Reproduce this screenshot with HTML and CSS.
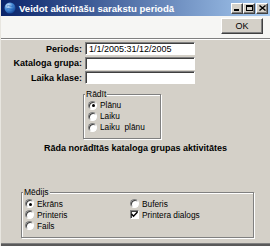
FILE: index.html
```html
<!DOCTYPE html>
<html lang="lv">
<head>
    <meta charset="UTF-8">
    <title>Veidot aktivitāšu sarakstu periodā</title>
    <link rel="stylesheet" href="styles.css">
</head>
<body>

    <div class="window">

        <!-- Title bar -->
        <div class="titlebar">
            <svg class="app-icon" width="12" height="12" viewBox="0 0 12 12">
                <defs>
                    <radialGradient id="globe" cx="0.35" cy="0.3" r="0.8">
                        <stop offset="0" stop-color="#e8f4ff"/>
                        <stop offset="0.45" stop-color="#4a8ed8"/>
                        <stop offset="1" stop-color="#0b3a8c"/>
                    </radialGradient>
                </defs>
                <circle cx="6" cy="6" r="5.5" fill="url(#globe)"/>
                <path d="M3 4 C5 3 7 5 9 4 M2.5 7 C5 6 7 8 10 7" stroke="#1d5fb8" stroke-width="0.8" fill="none"/>
            </svg>
            <span class="title">Veidot aktivitāšu sarakstu periodā</span>
            <div class="caption-buttons">
                <span class="cap-btn"><span class="min-glyph"></span></span>
                <span class="cap-btn"><span class="max-glyph"></span></span>
                <span class="cap-btn close">
                    <svg width="7" height="6" viewBox="0 0 7 6"><path d="M0.5 0.5 L6.5 5.5 M6.5 0.5 L0.5 5.5" stroke="#000" stroke-width="1.4"/></svg>
                </span>
            </div>
        </div>

        <!-- Toolbar with OK -->
        <div class="toolbar">
            <button class="btn">OK</button>
        </div>

        <div class="content">
            <div class="fields">
                <label>Periods:</label>
                <input type="text" value="1/1/2005:31/12/2005">
                <label>Kataloga grupa:</label>
                <input type="text" value="">
                <label>Laika klase:</label>
                <input type="text" value="">
            </div>

            <fieldset class="group group-show">
                <legend>Rādīt</legend>
                <div class="option"><span class="radio checked"></span>Plānu</div>
                <div class="option"><span class="radio"></span>Laiku</div>
                <div class="option"><span class="radio"></span>Laiku&nbsp; plānu</div>
            </fieldset>

            <p class="note">Rāda norādītās kataloga grupas aktivitātes</p>

            <fieldset class="group group-media">
                <legend>Mēdijs</legend>
                <div class="media-grid">
                    <div class="option"><span class="radio checked"></span>Ekrāns</div>
                    <div class="option"><span class="radio"></span>Buferis</div>
                    <div class="option"><span class="radio"></span>Printeris</div>
                    <div class="option">
                        <span class="check">
                            <svg width="7" height="7" viewBox="0 0 7 7"><path d="M0.5 3 L2.5 5.2 L6.5 1" stroke="#000" stroke-width="1.5" fill="none"/></svg>
                        </span>Printera dialogs
                    </div>
                    <div class="option"><span class="radio"></span>Fails</div>
                </div>
            </fieldset>
        </div>

        <div class="frame-bottom"></div>
    </div>

</body>
</html>
```

FILE: styles.css
```css
* {
    margin: 0;
    padding: 0;
    box-sizing: border-box;
    font-family: "Liberation Sans", Arial, sans-serif;
    font-size: 9px;
}

body {
    width: 270px;
    height: 246px;
    overflow: hidden;
    background: #d4d0c8;
}

.window {
    display: flex;
    flex-direction: column;
    height: 246px;
    border-left: 1px solid #e8e6e0;
}

/* Title bar */
.titlebar {
    height: 16px;
    display: flex;
    align-items: center;
    padding-left: 3px;
    background: linear-gradient(to right, #0a246a, #a6caf0);
    color: #fff;
}

.app-icon {
    margin-right: 3px;
}

.title {
    font-weight: bold;
    font-size: 9.6px;
    flex: 1;
    white-space: nowrap;
}

.caption-buttons {
    display: flex;
    margin-right: 2px;
}

.cap-btn {
    width: 12px;
    height: 11px;
    background: #d4d0c8;
    border: 1px solid;
    border-color: #fff #404040 #404040 #fff;
    box-shadow: inset -1px -1px 0 #808080;
    display: flex;
    align-items: center;
    justify-content: center;
}

.cap-btn.close {
    margin-left: 1px;
}

.min-glyph {
    width: 5px;
    height: 2px;
    background: #000;
    margin-top: 4px;
    margin-right: 1px;
}

.max-glyph {
    width: 7px;
    height: 6px;
    border: 1px solid #000;
    border-top-width: 2px;
}

/* Toolbar */
.toolbar {
    height: 23px;
    display: flex;
    justify-content: flex-end;
    align-items: flex-start;
    padding: 2px 7px 0 0;
    background: #f6f6f4;
    border-bottom: 1px solid #808080;
    box-shadow: 0 1px 0 #fff;
}

.btn {
    width: 42px;
    height: 16px;
    background: #d4d0c8;
    border: 1px solid;
    border-color: #fff #404040 #404040 #fff;
    box-shadow: inset -1px -1px 0 #808080;
    color: #000;
}

/* Form */
.content {
    flex: 1;
    padding-top: 3px;
    display: flex;
    flex-direction: column;
}

.fields {
    display: grid;
    grid-template-columns: 81px 110px;
    column-gap: 3px;
    row-gap: 1.5px;
    align-items: center;
}

.fields label {
    font-weight: bold;
    text-align: right;
}

.fields input {
    height: 13px;
    border: 1px solid;
    border-color: #808080 #fff #fff #808080;
    box-shadow: inset 1px 1px 0 #404040;
    padding: 0 3px;
    background: #fff;
    outline: none;
}

.group {
    border: 1px solid #808080;
    box-shadow: inset 1px 1px 0 #fff, 1px 1px 0 #fff;
    padding: 0;
    min-inline-size: 0;
}

.group legend {
    line-height: 11px;
    font-size: 8.5px;
    padding: 0 1px;
    margin-left: 1px;
    background: #d4d0c8;
}

.option {
    display: flex;
    align-items: center;
    height: 11px;
    font-size: 8.3px;
    white-space: nowrap;
}

.radio {
    width: 9px;
    height: 9px;
    border-radius: 50%;
    background: #fff;
    border: 1px solid;
    border-color: #808080 #fff #fff #808080;
    box-shadow: inset 1px 1px 0 #404040;
    margin-right: 3px;
    display: flex;
    align-items: center;
    justify-content: center;
}

.radio.checked::after {
    content: "";
    width: 3px;
    height: 3px;
    border-radius: 50%;
    background: #000;
    margin: 1px 0 0 1px;
}

.check {
    width: 9px;
    height: 9px;
    background: #fff;
    border: 1px solid;
    border-color: #808080 #fff #fff #808080;
    box-shadow: inset 1px 1px 0 #404040;
    margin-right: 3px;
    display: flex;
    align-items: center;
    justify-content: center;
}

.group-show {
    margin: 4.5px 0 0 82px;
    width: 78px;
    padding: 0 0 5px 4px;
}

.group-show legend {
    margin-left: -3px;
}

.note {
    font-weight: bold;
    text-align: center;
    line-height: 11px;
    margin-top: 4.5px;
}

.group-media {
    margin: 33px 0 0 20px;
    width: 233px;
    padding: 0 0 6px 3px;
}

.group-media legend {
    margin-left: -2px;
}

.media-grid {
    display: grid;
    grid-template-columns: 105px 1fr;
}

.frame-bottom {
    height: 3px;
    background: #5a5a5a;
    border-top: 1px solid #808080;
}
```
